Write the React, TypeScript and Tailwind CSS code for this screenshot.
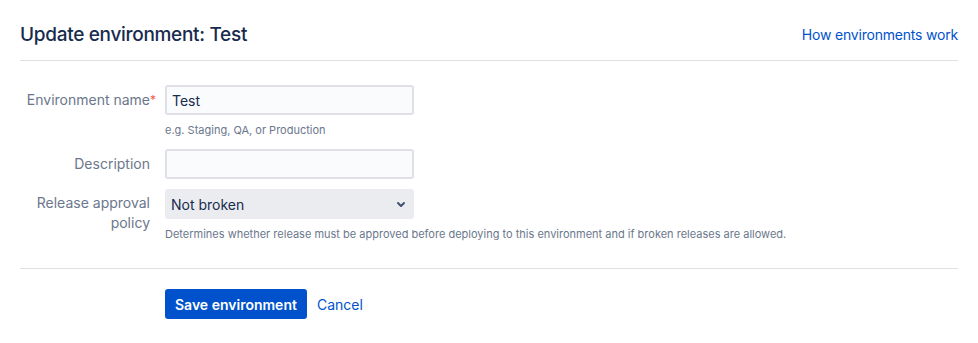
export default function App() {
  return (
    <div className="min-h-[343px] w-[978px] bg-white px-5 font-['Inter',sans-serif] text-[#172B4D]">
      <div className="flex items-center justify-between border-b border-[#DFE1E6] pt-[21px] pb-[11px]">
        <h1 className="text-[19px] leading-7 font-medium tracking-[-0.3px]">Update environment: Test</h1>
        <a className="text-[14px] leading-5 tracking-[-0.2px] text-[#0052CC]" href="#">
          How environments work
        </a>
      </div>

      <form className="pt-6" onSubmit={(e) => e.preventDefault()}>
        <div className="flex">
          <label className="w-[130px] shrink-0 pt-[5px] text-right text-[14px] leading-5 text-[#6B778C]">
            Environment name<span className="absolute text-[12px] text-[#EF5C48]">*</span>
          </label>
          <div className="ml-[15px]">
            <input
              defaultValue="Test"
              className="h-[30px] w-[249px] rounded-[3px] border-2 border-[#DFE1E6] bg-[#FAFBFC] px-[5px] text-[14px] text-[#172B4D] outline-none"
            />
            <p className="mt-[7px] text-[11px] leading-4 text-[#6B778C]">e.g. Staging, QA, or Production</p>
          </div>
        </div>

        <div className="mt-[11px] flex">
          <label className="w-[130px] shrink-0 pt-[5px] text-right text-[14px] leading-5 text-[#6B778C]">
            Description
          </label>
          <div className="ml-[15px]">
            <input className="h-[30px] w-[249px] rounded-[3px] border-2 border-[#DFE1E6] bg-[#FAFBFC] px-[5px] text-[14px] outline-none" />
          </div>
        </div>

        <div className="mt-[10px] flex">
          <label className="w-[130px] shrink-0 pt-[4px] text-right text-[14px] leading-5 text-[#6B778C]">
            Release approval policy
          </label>
          <div className="ml-[15px]">
            <div className="flex h-[30px] w-[249px] items-center justify-between rounded-[3px] bg-[#EBECF0] pl-[6px] text-[14px] text-[#172B4D]">
              <span>Not broken</span>
              <svg viewBox="0 0 24 24" className="mr-[1px] h-6 w-6" fill="#42526E">
                <path d="M8.292 10.293a1.009 1.009 0 000 1.419l2.939 2.965c.218.215.5.322.779.322s.556-.107.769-.322l2.93-2.955a1.01 1.01 0 000-1.419.987.987 0 00-1.406 0l-2.298 2.317-2.307-2.327a.99.99 0 00-1.406 0z" />
              </svg>
            </div>
            <p className="mt-[7px] whitespace-nowrap text-[11px] leading-4 text-[#6B778C]">
              Determines whether release must be approved before deploying to this environment and if broken releases are allowed.
            </p>
          </div>
        </div>

        <div className="mt-[26px] border-t border-[#DFE1E6]" />

        <div className="ml-[145px] flex items-center gap-[10px] pt-5">
          <button
            type="submit"
            className="h-[30px] rounded-[3px] bg-[#0052CC] px-[10px] text-[14px] font-semibold text-white"
          >
            Save environment
          </button>
          <a className="text-[14px] text-[#0052CC]" href="#">
            Cancel
          </a>
        </div>
      </form>
    </div>
  );
}
